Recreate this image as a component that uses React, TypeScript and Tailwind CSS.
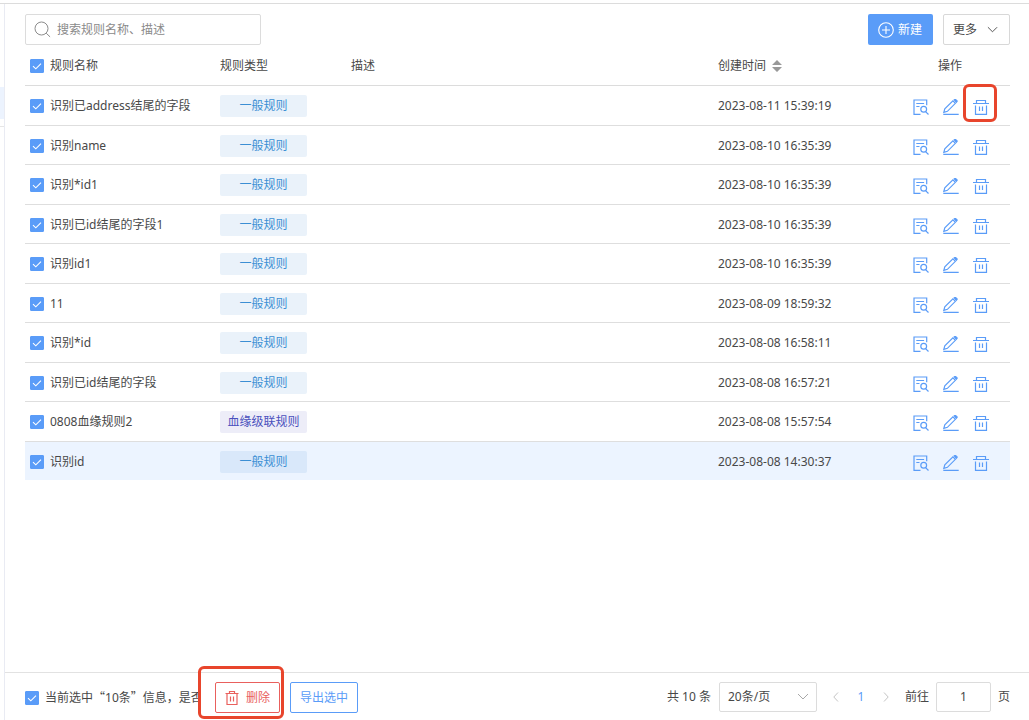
import { useState, type ReactNode } from 'react';

type Rule = { id: number; name: string; kind: 'general' | 'lineage'; created: string };

const INITIAL_RULES: Rule[] = [
  { id: 1, name: '识别已address结尾的字段', kind: 'general', created: '2023-08-11 15:39:19' },
  { id: 2, name: '识别name', kind: 'general', created: '2023-08-10 16:35:39' },
  { id: 3, name: '识别*id1', kind: 'general', created: '2023-08-10 16:35:39' },
  { id: 4, name: '识别已id结尾的字段1', kind: 'general', created: '2023-08-10 16:35:39' },
  { id: 5, name: '识别id1', kind: 'general', created: '2023-08-10 16:35:39' },
  { id: 6, name: '11', kind: 'general', created: '2023-08-09 18:59:32' },
  { id: 7, name: '识别*id', kind: 'general', created: '2023-08-08 16:58:11' },
  { id: 8, name: '识别已id结尾的字段', kind: 'general', created: '2023-08-08 16:57:21' },
  { id: 9, name: '0808血缘规则2', kind: 'lineage', created: '2023-08-08 15:57:54' },
  { id: 10, name: '识别id', kind: 'general', created: '2023-08-08 14:30:37' },
];

function Checkbox({ checked, onChange, label, children }: { checked: boolean; onChange: () => void; label?: string; children?: ReactNode }) {
  return (
    <label className="flex items-center gap-1.5 whitespace-nowrap">
      <span className="grid size-3.5 shrink-0">
        <input
          type="checkbox"
          checked={checked}
          onChange={onChange}
          aria-label={label}
          className="peer col-start-1 row-start-1 size-3.5 appearance-none rounded-[1px] border border-[#c8c8c8] bg-white checked:border-[#5a9cf8] checked:bg-[#5a9cf8]"
        />
        <svg viewBox="0 0 14 14" className="pointer-events-none col-start-1 row-start-1 size-3.5 opacity-0 peer-checked:opacity-100" fill="none" stroke="#fff" strokeWidth="1.1">
          <path d="M3 7.2 5.8 9.8 11 4.6" />
        </svg>
      </span>
      {children}
    </label>
  );
}

function TrashIcon() {
  return (
    <svg viewBox="0 0 16 16" className="size-4" fill="none" stroke="currentColor" strokeWidth="1.2">
      <path d="M0 4.500h16M3.500 4.500v-3h9v3M2.500 6.500v8.900h11V6.500M6.500 7.500v4.500M9.500 7.500v4.500" />
    </svg>
  );
}

function BinIcon() {
  return (
    <svg viewBox="0 0 14 16" className="h-4 w-3.5" fill="none" stroke="currentColor" strokeWidth="1.200">
      <path d="M.5 3.500h13M4.500 3.500v-2h5v2M2 3.500v11h10v-11M5.500 6.500v5M8.500 6.500v5" />
    </svg>
  );
}

function DetailIcon() {
  return (
    <svg viewBox="0 0 16 16" className="size-4" fill="none" stroke="currentColor" strokeWidth="1.200">
      <path d="M7.500 15.400H1V1h12.700v5.200M3.300 4.500h7.800M3.300 7.500h3.200M12.800 12.800l2.700 2.700" />
      <circle cx="10.700" cy="10.300" r="2.900" />
    </svg>
  );
}

function EditIcon() {
  return (
    <svg viewBox="0 0 16 16" className="size-4" fill="none" stroke="currentColor" strokeWidth="1.200">
      <path d="M.8 13.300 1.800 9.800 9.900 1.800l2.500 2.500L4.400 12.300.8 13.300ZM.3 15.400h15.400" />
      <path d="m11.200.9 1.100-.7 1.900 1.900-.8 1.100Z" fill="currentColor" />
    </svg>
  );
}

function Chevron({ className, d = 'm1 1 5 5 5-5', box = '0 0 12 7' }: { className: string; d?: string; box?: string }) {
  return (
    <svg viewBox={box} className={className} fill="none" stroke="currentColor" strokeWidth="1">
      <path d={d} />
    </svg>
  );
}

export default function App() {
  const [rules, setRules] = useState(INITIAL_RULES);
  const [selected, setSelected] = useState<number[]>(INITIAL_RULES.map((r) => r.id));
  const [query, setQuery] = useState('');
  const [page, setPage] = useState('1');
  const [newestFirst, setNewestFirst] = useState(true);

  const allSelected = rules.length > 0 && selected.length === rules.length;
  const toggleAll = () => setSelected(allSelected ? [] : rules.map((r) => r.id));
  const toggle = (id: number) => setSelected((s) => (s.includes(id) ? s.filter((x) => x !== id) : [...s, id]));
  const remove = (ids: number[]) => {
    setRules((rs) => rs.filter((r) => !ids.includes(r.id)));
    setSelected((s) => s.filter((id) => !ids.includes(id)));
  };
  const visible = rules.filter((r) => r.name.includes(query));
  const rows = newestFirst ? visible : [...visible].reverse();

  return (
    <div className="flex min-h-screen flex-col bg-white pt-[3px] font-['Noto_Sans','Noto_Sans_CJK_SC',sans-serif] text-xs text-[#484848]">
      <div className="flex flex-1 border-t border-[#dcdcdc]">
        <aside className="w-[5px] shrink-0 border-r border-[#e9ebf3] pt-[83px]">
          <div className="h-8 bg-[#ecf3fe]" />
          <div className="h-2 border-b border-[#e6e6e6]" />
        </aside>

        <main className="flex min-w-0 flex-1 flex-col">
          <section className="flex-1 pt-2.5 pr-[19px] pl-5">
            <header className="flex items-center gap-2.5">
              <label className="mr-auto flex h-[31px] w-[236px] items-center gap-1.5 rounded-xs border border-[#dcdcdc] pl-2">
                <svg viewBox="0 0 17 17" className="size-[17px] shrink-0" fill="none" stroke="#8c8c8c" strokeWidth="1">
                  <circle cx="7.500" cy="7.500" r="6.500" />
                  <path d="m12.200 12.200 3.900 3.700" />
                </svg>
                <input
                  value={query}
                  onChange={(e) => setQuery(e.target.value)}
                  aria-label="搜索规则"
                  placeholder="搜索规则名称、描述"
                  className="min-w-0 flex-1 outline-none placeholder:text-[#8a8a8a]"
                />
              </label>
              <button type="button" className="flex h-[31px] items-center gap-1 rounded-xs bg-[#5a9cf8] pr-[11px] pl-2.5 text-white">
                <svg viewBox="0 0 16 16" className="size-4" fill="none" stroke="currentColor" strokeWidth="1.100">
                  <circle cx="8" cy="8" r="7.300" />
                  <path d="M8 4v8M4 8h8" />
                </svg>
                新建
              </button>
              <button type="button" className="flex h-[31px] items-center gap-2.5 rounded-xs border border-[#d8d8d8] pr-[11px] pl-[9px]">
                更多
                <Chevron className="h-[7px] w-[11px]" />
              </button>
            </header>

            <table className="w-full table-fixed text-left">
              <colgroup>
                <col className="w-[195px]" />
                <col className="w-[131px]" />
                <col />
                <col className="w-[195px]" />
                <col className="w-[97px]" />
              </colgroup>
              <thead>
                <tr className="h-10 border-b border-[#dcdcdc] [&>th]:pt-0.5">
                  <th className="pl-[5px] font-normal">
                    <Checkbox checked={allSelected} onChange={toggleAll}>规则名称</Checkbox>
                  </th>
                  <th className="font-normal">规则类型</th>
                  <th className="font-normal">描述</th>
                  <th className="font-normal">
                    <button type="button" onClick={() => setNewestFirst((v) => !v)} className="flex items-center gap-1.5">
                      创建时间
                      <svg viewBox="0 0 10 12" className="h-3 w-2.5" fill="#999">
                        <path d="M5 0 10 5H0ZM5 12 0 7h10Z" />
                      </svg>
                    </button>
                  </th>
                  <th className="pl-[25px] font-normal">操作</th>
                </tr>
              </thead>
              <tbody>
                {rows.map((r, i) => (
                  <tr key={r.id} className="h-10 border-b border-[#dedede] last:border-transparent last:bg-[#ecf4ff] even:h-[39px] [&>td]:pt-0.5">
                    <td className="pl-[5px]">
                      <Checkbox checked={selected.includes(r.id)} onChange={() => toggle(r.id)}>{r.name}</Checkbox>
                    </td>
                    <td>
                      {r.kind === 'general' ? (
                        <span className="block h-[22px] w-[87px] rounded-xs bg-[#3282cd]/10 text-center leading-[22px] text-[#3b8fd4]">一般规则</span>
                      ) : (
                        <span className="block h-[22px] w-[87px] rounded-xs bg-[#ededf8] text-center leading-[22px] text-[#4a50bd]">血缘级联规则</span>
                      )}
                    </td>
                    <td />
                    <td>{r.created}</td>
                    <td>
                      <div className="flex gap-3.5 pt-0.5 text-[#5a9cf8]">
                        <button type="button" aria-label="查看"><DetailIcon /></button>
                        <button type="button" aria-label="编辑"><EditIcon /></button>
                        <button type="button" aria-label="删除" onClick={() => remove([r.id])} className="relative">
                          <TrashIcon />
                          {i === 0 && <span className="pointer-events-none absolute -top-[15px] -right-2 -bottom-[7px] -left-2.5 rounded-md border-[3px] border-[#e8452c]" />}
                        </button>
                      </div>
                    </td>
                  </tr>
                ))}
              </tbody>
            </table>
          </section>

          <footer className="flex h-12 items-center border-t border-[#e2e2e2] pt-0.5 pr-[19px] pl-5 whitespace-nowrap">
            <div className="w-[176px] overflow-hidden">
              <Checkbox checked={allSelected} onChange={toggleAll}>
                <span>
                  当前选中<span className="font-['Noto_Sans_CJK_SC',sans-serif]">“</span>{selected.length}条<span className="font-['Noto_Sans_CJK_SC',sans-serif]">”</span>信息，是否
                </span>
              </Checkbox>
            </div>
            <div className="relative ml-3.5">
              <button type="button" onClick={() => remove(selected)} className="flex h-[31px] items-center gap-[7px] rounded-xs border border-[#e9605d] px-[9px] text-[#e9605d]">
                <BinIcon />
                删除
              </button>
              <span className="pointer-events-none absolute -top-4 -right-1 -bottom-1.5 -left-[17px] rounded-md border-[3px] border-[#e8452c]" />
            </div>
            <button type="button" className="ml-2.5 h-[31px] rounded-xs border border-[#5a9cf8] px-[9px] text-[#5a9cf8]">导出选中</button>

            <nav aria-label="分页" className="ml-auto flex items-center pb-0.5">
              <span>共 {rules.length} 条</span>
              <span className="ml-2 grid w-[98px] items-center">
                <select aria-label="每页条数" className="col-start-1 row-start-1 h-[30px] appearance-none rounded-xs border border-[#dcdcdc] bg-white pl-2">
                  <option>20条/页</option>
                  <option>50条/页</option>
                </select>
                <Chevron className="pointer-events-none col-start-1 row-start-1 mr-2 h-[7px] w-3 justify-self-end text-[#a8a8a8]" />
              </span>
              <button type="button" aria-label="上一页" className="ml-4 text-[#c4c4c4]"><Chevron className="h-2.5 w-1.5" box="0 0 6 10" d="M5 .5.800 5 5 9.500" /></button>
              <button type="button" className="ml-4 w-3 text-[#5a9cf8]">1</button>
              <button type="button" aria-label="下一页" className="ml-4 text-[#c4c4c4]"><Chevron className="h-2.5 w-1.5" box="0 0 6 10" d="M1 .5 5.200 5 1 9.500" /></button>
              <label className="ml-4 flex items-center gap-[7px]">
                前往
                <input value={page} onChange={(e) => setPage(e.target.value)} className="h-[30px] w-[55px] rounded-xs border border-[#dcdcdc] text-center outline-none" />
                页
              </label>
            </nav>
          </footer>
        </main>
      </div>
    </div>
  );
}
